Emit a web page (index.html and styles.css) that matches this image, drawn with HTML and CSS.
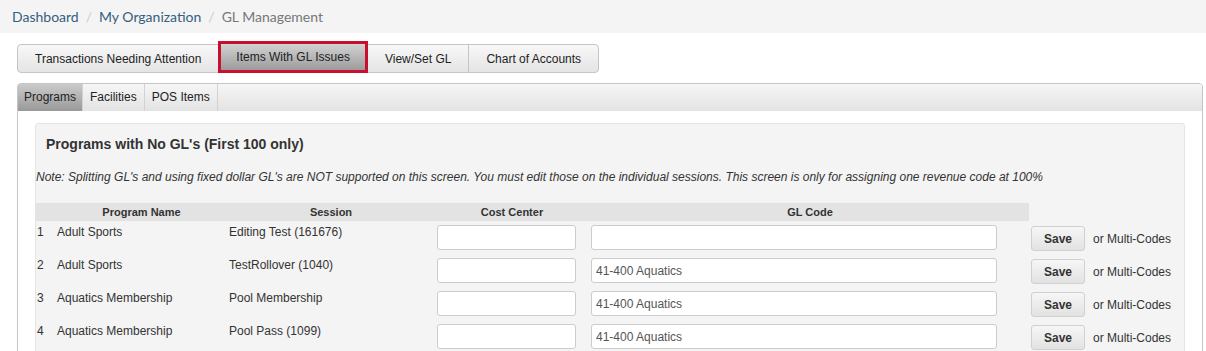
FILE: index.html
```html
<!DOCTYPE html>
<html lang="en">
<head>
  <meta charset="UTF-8">
  <title>GL Management</title>
  <link rel="stylesheet" href="styles.css">
</head>
<body>
  <div class="crumbs">
    <a href="#">Dashboard</a><span class="sep">/</span><a href="#">My Organization</a><span class="sep">/</span><span class="current">GL Management</span>
  </div>

  <div class="main">
    <div class="tabs">
      <button class="tab">Transactions Needing Attention</button>
      <button class="tab active">Items With GL Issues</button>
      <button class="tab">View/Set GL</button>
      <button class="tab last">Chart of Accounts</button>
    </div>

    <div class="panel">
      <div class="subtabs">
        <span class="subtab active">Programs</span>
        <span class="subtab">Facilities</span>
        <span class="subtab">POS Items</span>
      </div>

      <div class="panel-body">
        <div class="box">
          <h2>Programs with No GL's (First 100 only)</h2>
          <p class="note">Note: Splitting GL's and using fixed dollar GL's are NOT supported on this screen. You must edit those on the individual sessions. This screen is only for assigning one revenue code at 100%</p>

          <div class="head">
            <div>Program Name</div>
            <div>Session</div>
            <div>Cost Center</div>
            <div class="gl-head">GL Code</div>
          </div>

          <div class="row">
            <div class="num">1</div>
            <div>Adult Sports</div>
            <div>Editing Test (161676)</div>
            <div><input class="cost" type="text"></div>
            <div><input class="gl" type="text"></div>
            <div><button class="save">Save</button></div>
            <div class="multi">or Multi-Codes</div>
          </div>
          <div class="row">
            <div class="num">2</div>
            <div>Adult Sports</div>
            <div>TestRollover (1040)</div>
            <div><input class="cost" type="text"></div>
            <div><input class="gl" type="text" value="41-400 Aquatics"></div>
            <div><button class="save">Save</button></div>
            <div class="multi">or Multi-Codes</div>
          </div>
          <div class="row">
            <div class="num">3</div>
            <div>Aquatics Membership</div>
            <div>Pool Membership</div>
            <div><input class="cost" type="text"></div>
            <div><input class="gl" type="text" value="41-400 Aquatics"></div>
            <div><button class="save">Save</button></div>
            <div class="multi">or Multi-Codes</div>
          </div>
          <div class="row">
            <div class="num">4</div>
            <div>Aquatics Membership</div>
            <div>Pool Pass (1099)</div>
            <div><input class="cost" type="text"></div>
            <div><input class="gl" type="text" value="41-400 Aquatics"></div>
            <div><button class="save">Save</button></div>
            <div class="multi">or Multi-Codes</div>
          </div>
        </div>
      </div>
    </div>
  </div>
</body>
</html>
```

FILE: styles.css
```css
html, body { overflow: hidden; }
body { margin: 0; background: #fff; font-family: "Liberation Sans", Arial, sans-serif; font-size: 12px; color: #333; }

.crumbs { height: 33px; line-height: 33px; padding-left: 12px; background: #f4f4f4; font-family: Lato, "Liberation Sans", sans-serif; font-size: 14px; }
.crumbs a { color: #35607e; text-decoration: none; }
.crumbs .sep { color: #ccc; margin: 0 7px; }
.crumbs .current { color: #777; }

.main { padding: 0 3px 0 17px; }

.tabs { display: flex; align-items: flex-start; height: 29px; margin-top: 11px; }
.tab { height: 29px; box-sizing: border-box; padding: 0 17px; margin: 0 0 0 -1px; border: 1px solid #c5c5c5; background: linear-gradient(#f8f8f8, #e4e4e4); font-family: "Liberation Sans", Arial, sans-serif; font-size: 12px; color: #222; }
.tab:first-child { margin-left: 0; border-radius: 4px 0 0 4px; }
.tab.last { border-radius: 0 4px 4px 0; }
.tab.active { position: relative; z-index: 1; height: 32px; margin-top: -3px; padding: 0 15px; border: 3px solid #c8102e; background: linear-gradient(#d2d2d2, #9c9c9c); }

.panel { margin-top: 10px; border: 1px solid #c5c5c5; border-radius: 4px 4px 0 0; height: 300px; }
.subtabs { display: flex; height: 27px; background: linear-gradient(#f6f6f6, #e3e3e3); border-radius: 3px 3px 0 0; }
.subtab { line-height: 27px; padding: 0 7px; border-right: 1px solid #d2d2d2; color: #222; }
.subtab.active { padding: 0 6px; background: linear-gradient(#cbcbcb, #999); }

.panel-body { padding: 12px 17px 0 17px; }
.box { background: #f4f4f4; border: 1px solid #e5e5e5; border-radius: 3px; height: 240px; }
.box h2 { margin: 0; padding: 11px 10px 0; font-size: 14px; line-height: 18px; font-weight: bold; color: #333; }
.note { margin: 17px 0 18px; font-size: 12px; line-height: 15px; font-style: italic; color: #333; }

.head { display: grid; grid-template-columns: 211px 168px 194px 402px; width: 993px; height: 18px; line-height: 18px; background: #e3e3e3; font-size: 11px; font-weight: bold; text-align: center; }

.row { display: grid; grid-template-columns: 21px 172px 208px 154px 440px 62px auto; height: 33px; line-height: 14px; }
.row > div { padding-top: 4px; }
.row .num { padding-left: 1px; }
.row input { margin: 0; height: 25px; box-sizing: border-box; border: 1px solid #ccc; border-radius: 3px; background: #fff; padding: 0 4px; font-family: "Liberation Sans", Arial, sans-serif; font-size: 12px; color: #555; }
.row input.cost { width: 139px; }
.row input.gl { width: 406px; }
.save { margin-top: 1px; width: 54px; height: 25px; border: 1px solid #d0d0d0; border-radius: 3px; background: linear-gradient(#f6f6f6, #e2e2e2); font-family: "Liberation Sans", Arial, sans-serif; font-size: 12px; font-weight: bold; color: #333; padding: 0; }
.row .multi { padding-top: 11px; }
```
